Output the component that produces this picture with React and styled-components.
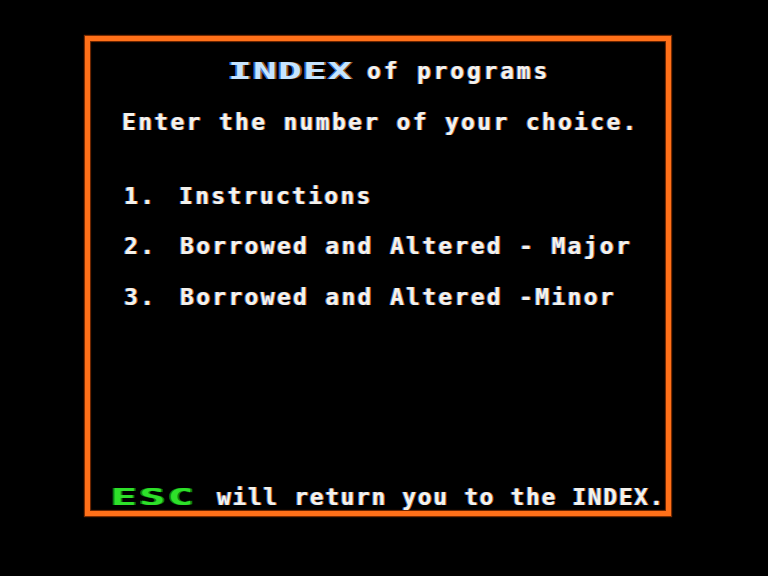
import React from "react";
import styled, { createGlobalStyle } from "styled-components";

const Global = createGlobalStyle`
  html, body { margin: 0; padding: 0; background: #000; }
  body { width: 768px; height: 576px; overflow: hidden; }
`;

const Screen = styled.div`
  width: 768px;
  height: 576px;
  background: #000;
  box-sizing: border-box;
  padding: 36px 0 0 85px;
  font-family: "DejaVu Sans Mono", "Liberation Mono", monospace;
  font-weight: bold;
  font-size: 23px;
  line-height: 25px;
  color: #f4f1ec;
`;

const Frame = styled.div`
  box-sizing: border-box;
  width: 586px;
  height: 480px;
  border: 5px solid #ff7019;
  box-shadow: 0 0 1px 1px rgba(200, 70, 0, 0.6), inset 0 0 1px 1px rgba(200, 70, 0, 0.6);
  display: flex;
  flex-direction: column;
  padding-top: 18px;
`;

const Line = styled.div`
  white-space: pre;
  letter-spacing: ${(p) => p.$ls ?? 2.3}px;
  padding-left: ${(p) => p.$x}px;
  margin-top: ${(p) => p.$mt || 0}px;
  text-shadow: -1px 0 0 rgba(70, 150, 255, 0.75), 1px 0 0 rgba(255, 130, 40, 0.75);
  display: flex;
  align-items: baseline;
`;

const Num = styled.span`
  width: ${(p) => p.$w}px;
  flex: none;
`;

const WideBox = styled.span`
  display: inline-block;
  width: ${(p) => p.$w}px;
  flex: none;
`;

const Wide = styled.span`
  display: inline-block;
  transform: scaleX(${(p) => p.$sx});
  transform-origin: left center;
  letter-spacing: ${(p) => p.$ls}px;
  color: ${(p) => p.$color};
  text-shadow: ${(p) => p.$shadow};
`;

export default function App() {
  return (
    <>
      <Global />
      <Screen>
        <Frame>
          <Line $x={138} $ls={2.8}>
            <WideBox $w={139}>
              <Wide
                $sx={1.72}
                $ls={0.7}
                $color="#c6e4ff"
                $shadow="-1px 0 0 rgba(60,140,255,0.8), 1px 0 0 rgba(255,140,60,0.6)"
              >
                INDEX
              </Wide>
            </WideBox>
            <span>of programs</span>
          </Line>
          <Line $x={32} $mt={26}>
            Enter the number of your choice.
          </Line>
          <Line $x={34} $mt={49}>
            <Num $w={55}>1.</Num>
            <span>Instructions</span>
          </Line>
          <Line $x={34} $mt={25}>
            <Num $w={56}>2.</Num>
            <span>Borrowed and Altered - Major</span>
          </Line>
          <Line $x={34} $mt={26}>
            <Num $w={56}>3.</Num>
            <span>Borrowed and Altered -Minor</span>
          </Line>
          <Line $x={21} $mt={175} $ls={1.6}>
            <WideBox $w={106}>
              <Wide
                $sx={1.85}
                $ls={1.5}
                $color="#2ee02a"
                $shadow="-1px 0 0 rgba(20,160,20,0.8), 1px 0 0 rgba(20,160,20,0.8)"
              >
                ESC
              </Wide>
            </WideBox>
            <span>will return you to the INDEX.</span>
          </Line>
        </Frame>
      </Screen>
    </>
  );
}
